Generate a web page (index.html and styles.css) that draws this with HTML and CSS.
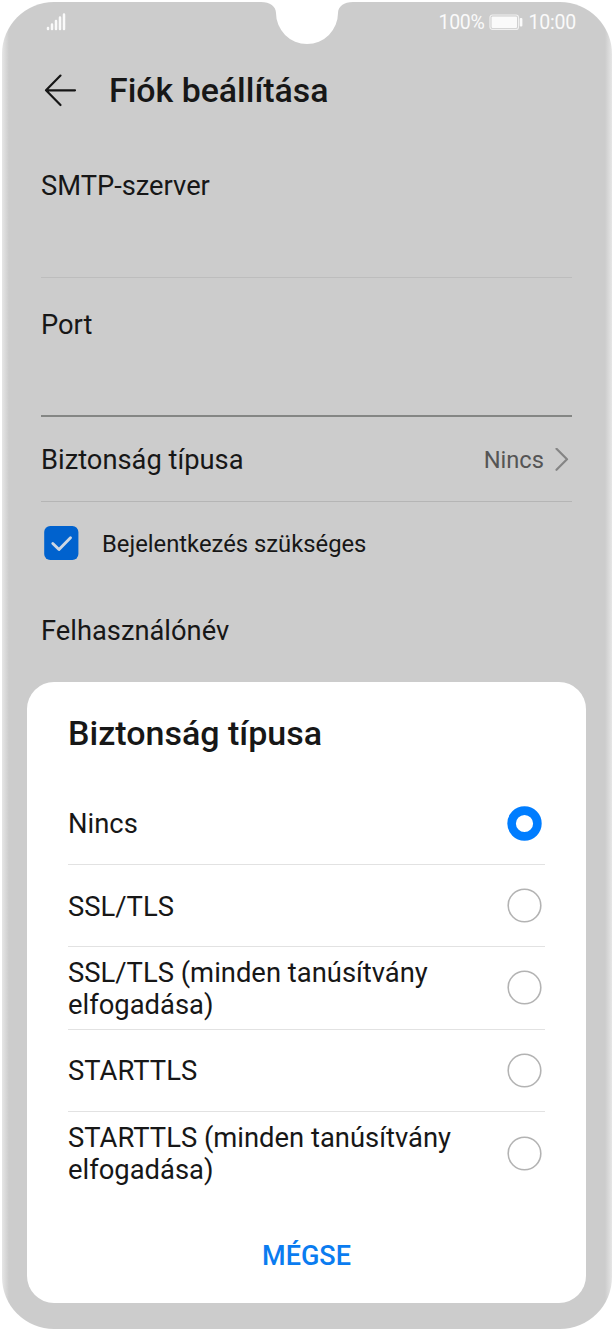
FILE: index.html
```
<!DOCTYPE html>
<html lang="hu">
<head>
<meta charset="utf-8">
<title>Fiók beállítása</title>
<link rel="stylesheet" href="styles.css">
</head>
<body>
<main class="phone">
  <svg class="notch" width="92" height="43" viewBox="0 0 92 43" aria-hidden="true"><path d="M0 0C9 0 15 4.500 15 11A31 31 0 0 0 77 11C77 4.500 83 0 92 0Z" fill="#fff"/></svg>
  <div class="status">
    <svg width="20" height="19" viewBox="0 0 20 19" aria-hidden="true"><path d="M2 15V16M6 11.500V16M10 8V16M14 4.500V16M18 1.500V16" stroke="#fafafa" stroke-width="2.500" stroke-linecap="round"/></svg>
    <div class="status-right">
      <span class="battery-text">100%</span>
      <svg width="34" height="17" viewBox="0 0 34 17" aria-hidden="true"><rect x="1" y="1" width="28.500" height="14.400" rx="2.500" fill="none" stroke="#f0f0f0" stroke-width="1.200"/><rect x="2.500" y="2.500" width="25.500" height="11.400" rx="1" fill="#fafafa"/><rect x="30.700" y="4" width="2.700" height="8.500" rx="1" fill="#fafafa"/></svg>
      <span class="clock">10:00</span>
    </div>
  </div>
  <header class="header">
    <svg width="34" height="34" viewBox="0 0 34 34" aria-hidden="true"><path d="M32 17.300H3M17.500 2.600L3 17.300L17.500 32" fill="none" stroke="#161616" stroke-width="2.200" stroke-linecap="round" stroke-linejoin="round"/></svg>
    <h1 class="title page-title">Fiók beállítása</h1>
  </header>
  <section class="form">
    <div class="field"><span class="label">SMTP-szerver</span></div>
    <div class="field field-active"><span class="label">Port</span></div>
    <div class="setting">
      <span class="label">Biztonság típusa</span>
      <span class="value">Nincs<svg width="14" height="24" viewBox="0 0 14 24" aria-hidden="true"><path d="M1.500 .8L12 11.300L1.500 21.800" fill="none" stroke="#858585" stroke-width="2.200" stroke-linecap="round" stroke-linejoin="round"/></svg></span>
    </div>
    <div class="check-row">
      <svg width="35" height="34" viewBox="0 0 35 34" aria-hidden="true"><rect x=".2" width="34.200" height="34" rx="6" fill="#0062ce"/><path d="M8.800 17.500L15 23.500L26.500 11.800" fill="none" stroke="#cdd7e3" stroke-width="2.900" stroke-linecap="round" stroke-linejoin="round"/></svg>
      <span class="check-label">Bejelentkezés szükséges</span>
    </div>
    <div class="field field-user"><span class="label">Felhasználónév</span></div>
  </section>
  <section class="dialog">
    <h2 class="title">Biztonság típusa</h2>
    <div class="options">
      <div class="option"><span>Nincs</span><svg width="35" height="35" viewBox="0 0 35 35"><circle class="radio-on" cx="17.500" cy="17.500" r="12.900"/></svg></div>
      <div class="option"><span>SSL/TLS</span><svg width="35" height="35" viewBox="0 0 35 35"><circle class="radio" cx="17.500" cy="17.500" r="16.300"/></svg></div>
      <div class="option"><span>SSL/TLS (minden tanúsítvány<br>elfogadása)</span><svg width="35" height="35" viewBox="0 0 35 35"><circle class="radio" cx="17.500" cy="17.500" r="16.300"/></svg></div>
      <div class="option"><span>STARTTLS</span><svg width="35" height="35" viewBox="0 0 35 35"><circle class="radio" cx="17.500" cy="17.500" r="16.300"/></svg></div>
      <div class="option"><span>STARTTLS (minden tanúsítvány<br>elfogadása)</span><svg width="35" height="35" viewBox="0 0 35 35"><circle class="radio" cx="17.500" cy="17.500" r="16.300"/></svg></div>
    </div>
    <div class="cancel"><span>MÉGSE</span></div>
  </section>
</main>
</body>
</html>
```
FILE: styles.css
```
* { box-sizing: border-box; }
body { margin: 0; padding: 2px 1.5px 1px 2px; height: 1330px; background: #fff; font-family: Roboto, sans-serif; color: #171717; overflow: hidden; }
svg { display: block; flex: none; }
.phone { position: relative; display: flex; flex-direction: column; height: 1327px; border-radius: 52px; overflow: hidden; background: linear-gradient(90deg, #e6e6e6, #ccc 7px, #ccc calc(100% - 7px), #e6e6e6); }
.notch { position: absolute; left: 259px; top: 0; }
.status { height: 40px; flex: none; display: flex; justify-content: space-between; align-items: center; padding: 0 35.500px 0 44px; color: #fafafa; font-size: 19.500px; line-height: 24px; }
.status-right { display: flex; align-items: center; gap: 5px; }
.battery-text { letter-spacing: -0.3px; padding-top: 1px; }
.clock { letter-spacing: -0.2px; padding-top: 1px; }
.header { height: 96px; flex: none; display: flex; align-items: center; gap: 32px; padding-left: 41px; }
.title { margin: 0; font-size: 34px; line-height: 40px; font-weight: 500; white-space: nowrap; }
.page-title { font-size: 33.900px; padding-top: 1px; }
.form { height: 544px; flex: none; padding: 0 39.500px 0 39px; }
.field { height: 140px; padding-top: 31.500px; border-bottom: 1px solid #bdbdbd; }
.field-active { height: 139px; border-bottom: 2px solid #848684; padding-top: 31px; }
.field-user { border: 0; padding-top: 31px; }
.label { display: block; font-size: 27.300px; line-height: 32px; white-space: nowrap; }
.setting { height: 85px; display: flex; align-items: center; justify-content: space-between; border-bottom: 1px solid #b5b5b5; padding: 2px 3px 0 0; }
.value { display: flex; align-items: center; gap: 11px; font-size: 23.700px; color: #555; }
.check-row { height: 82px; display: flex; align-items: center; gap: 23px; padding-left: 3px; }
.check-label { font-size: 23.800px; line-height: 28px; padding-top: 1px; white-space: nowrap; }
.dialog { margin-left: 25px; width: 559px; height: 621px; flex: none; border-radius: 27px; background: #fff; padding: 31px 41px 0; }
.options { margin-top: 29.500px; }
.option { height: 82.400px; display: flex; align-items: center; justify-content: space-between; border-bottom: 1px solid #e2e2e2; padding-right: 3px; font-size: 27.400px; line-height: 32px; white-space: nowrap; }
.option span { padding-top: 2px; }
.option:last-child { border-bottom: 0; }
.radio { fill: none; stroke: #b3b3b3; stroke-width: 1.600px; }
.radio-on { fill: none; stroke: #007dff; stroke-width: 8.600px; }
.cancel { height: 122px; padding-top: 2px; display: flex; align-items: center; justify-content: center; color: #0a7cf0; font-size: 27px; font-weight: 500; line-height: 32px; }
```
